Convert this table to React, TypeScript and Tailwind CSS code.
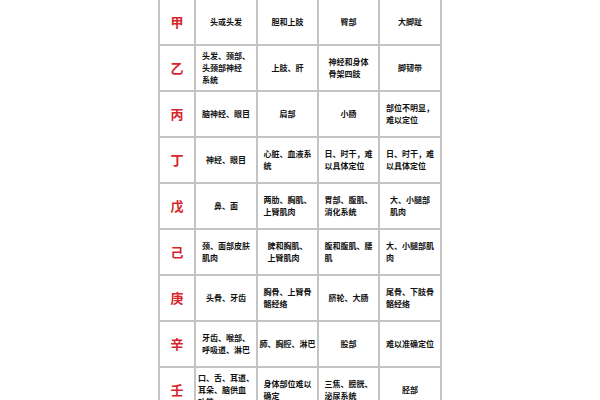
const ROWS: { stem: string; cells: string[][] }[] = [
  { stem: "甲", cells: [["头或头发"], ["胆和上肢"], ["臀部"], ["大脚趾"]] },
  {
    stem: "乙",
    cells: [["头发、颈部、", "头颈部神经", "系统"], ["上肢、肝"], ["神经和身体", "骨架四肢"], ["脚韧带"]],
  },
  { stem: "丙", cells: [["脑神经、眼目"], ["肩部"], ["小肠"], ["部位不明显，", "难以定位"]] },
  {
    stem: "丁",
    cells: [["神经、眼目"], ["心脏、血液系", "统"], ["日、时干，难", "以具体定位"], ["日、时干，难", "以具体定位"]],
  },
  {
    stem: "戊",
    cells: [["鼻、面"], ["两肋、胸肌、", "上臂肌肉"], ["胃部、腹肌、", "消化系统"], ["大、小腿部", "肌肉"]],
  },
  {
    stem: "己",
    cells: [["颈、面部皮肤", "肌肉"], ["脾和胸肌、", "上臂肌肉"], ["腹和腹肌、腰", "肌"], ["大、小腿部肌", "肉"]],
  },
  {
    stem: "庚",
    cells: [["头骨、牙齿"], ["胸骨、上臂骨", "骼经络"], ["脐轮、大肠"], ["尾骨、下肢骨", "骼经络"]],
  },
  {
    stem: "辛",
    cells: [["牙齿、喉部、", "呼吸道、淋巴"], ["肺、胸腔、淋巴"], ["股部"], ["难以准确定位"]],
  },
  {
    stem: "壬",
    cells: [["口、舌、耳道、", "耳朵、脑供血", "功能"], ["身体部位难以", "确定"], ["三焦、膀胱、", "泌尿系统"], ["胫部"]],
  },
];

const WIDTHS = ["w-[62px]", "w-[61px]", "w-[61px]", "w-[62px]"];

export default function App() {
  return (
    <div className="h-[400px] w-[600px] overflow-hidden bg-white font-['Noto_Sans_CJK_SC',sans-serif]">
      <div className="mx-auto -mt-[2px] w-[284px] border-l-2 border-t-2 border-[#c4c4c4]">
        {ROWS.map((row) => (
          <div key={row.stem} className="flex h-[46px] border-b-2 border-[#c4c4c4]">
            <div className="flex w-[36px] items-center justify-center border-r-2 border-[#c4c4c4] text-[13px] font-bold text-[#d7262b]">
              {row.stem}
            </div>
            {row.cells.map((lines, i) => (
              <div
                key={i}
                className={`flex items-center justify-center border-r-2 border-[#c4c4c4] px-[2px] ${WIDTHS[i]}`}
              >
                <div className="whitespace-nowrap text-left text-[8px] leading-[12px] font-bold text-[#111]">
                  {lines.map((l, j) => (
                    <div key={j}>{l}</div>
                  ))}
                </div>
              </div>
            ))}
          </div>
        ))}
      </div>
    </div>
  );
}
